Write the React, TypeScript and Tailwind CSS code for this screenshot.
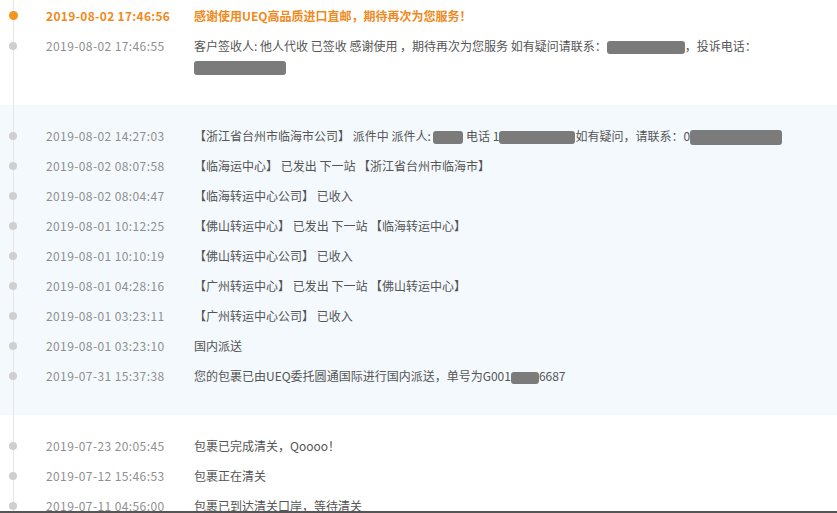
import type { ReactNode } from "react";

type TrackItem = {
  time: string;
  content: ReactNode;
  latest?: boolean;
};

function Mask({ className }: { className: string }) {
  return <span className={`inline-block rounded-[3px] bg-[#7b7b7b] align-middle ${className}`} />;
}

const groups: TrackItem[][] = [
  [
    {
      time: "2019-08-02 17:46:56",
      content: "感谢使用UEQ高品质进口直邮，期待再次为您服务！",
      latest: true,
    },
    {
      time: "2019-08-02 17:46:55",
      content: (
        <>
          客户签收人: 他人代收 已签收 感谢使用 ，期待再次为您服务 如有疑问请联系：
          <Mask className="h-[13px] w-[78px]" />
          ，投诉电话：
          <Mask className="h-[14px] w-[92px]" />
        </>
      ),
    },
  ],
  [
    {
      time: "2019-08-02 14:27:03",
      content: (
        <>
          【浙江省台州市临海市公司】 派件中 派件人: <Mask className="h-[13px] w-[30px]" /> 电话 1
          <Mask className="h-[13px] w-[76px]" />
          如有疑问，请联系：0
          <Mask className="h-[15px] w-[92px]" />
        </>
      ),
    },
    { time: "2019-08-02 08:07:58", content: "【临海运中心】 已发出 下一站 【浙江省台州市临海市】" },
    { time: "2019-08-02 08:04:47", content: "【临海转运中心公司】 已收入" },
    { time: "2019-08-01 10:12:25", content: "【佛山转运中心】 已发出 下一站 【临海转运中心】" },
    { time: "2019-08-01 10:10:19", content: "【佛山转运中心公司】 已收入" },
    { time: "2019-08-01 04:28:16", content: "【广州转运中心】 已发出 下一站 【佛山转运中心】" },
    { time: "2019-08-01 03:23:11", content: "【广州转运中心公司】 已收入" },
    { time: "2019-08-01 03:23:10", content: "国内派送" },
    {
      time: "2019-07-31 15:37:38",
      content: (
        <>
          您的包裹已由UEQ委托圆通国际进行国内派送，单号为G001
          <Mask className="h-[12px] w-[28px]" />
          6687
        </>
      ),
    },
  ],
  [
    { time: "2019-07-23 20:05:45", content: "包裹已完成清关，Qoooo！" },
    { time: "2019-07-12 15:46:53", content: "包裹正在清关" },
    { time: "2019-07-11 04:56:00", content: "包裹已到达清关口岸，等待清关" },
  ],
];

function TrackRow({ item }: { item: TrackItem }) {
  return (
    <div className="flex items-start py-[5px] text-[12px] leading-[20px]">
      <div className="flex w-[26px] shrink-0 justify-center pt-[6px]">
        {item.latest ? (
          <span className="relative -mt-px size-[9px] rounded-full bg-[#f7931e]" />
        ) : (
          <span className="relative size-2 rounded-full bg-[#cfcfcf]" />
        )}
      </div>
      <div
        className={
          item.latest
            ? "ml-[20px] w-[148px] shrink-0 font-bold tracking-[0.3px] text-[#f08a1c]"
            : "ml-[20px] w-[148px] shrink-0 tracking-[0.4px] text-[#8f8f8f]"
        }
      >
        {item.time}
      </div>
      <div
        className={
          item.latest
            ? "min-w-0 flex-1 pr-[20px] font-bold text-[#f08a1c]"
            : "min-w-0 flex-1 pr-[20px] text-[#555555]"
        }
      >
        {item.content}
      </div>
    </div>
  );
}

export default function App() {
  return (
    <div className="h-[513px] w-[837px] overflow-hidden bg-white font-['Microsoft_YaHei','Noto_Sans_CJK_SC',sans-serif]">
      <div className="relative h-[511px] overflow-hidden">
        <div className="absolute top-0 bottom-0 left-[13px] w-px bg-[#e6e6e6]" />
        {groups.map((group, index) => (
          <section
            className={
              index === 0
                ? "pt-px pb-6"
                : index === 1
                  ? "bg-[#f3f9fd] pt-4 pb-6"
                  : "pt-4 pb-6"
            }
            key={group[0].time}
          >
            {group.map((item) => (
              <TrackRow item={item} key={item.time} />
            ))}
          </section>
        ))}
      </div>
      <div className="h-[2px] bg-[#555555]" />
    </div>
  );
}
